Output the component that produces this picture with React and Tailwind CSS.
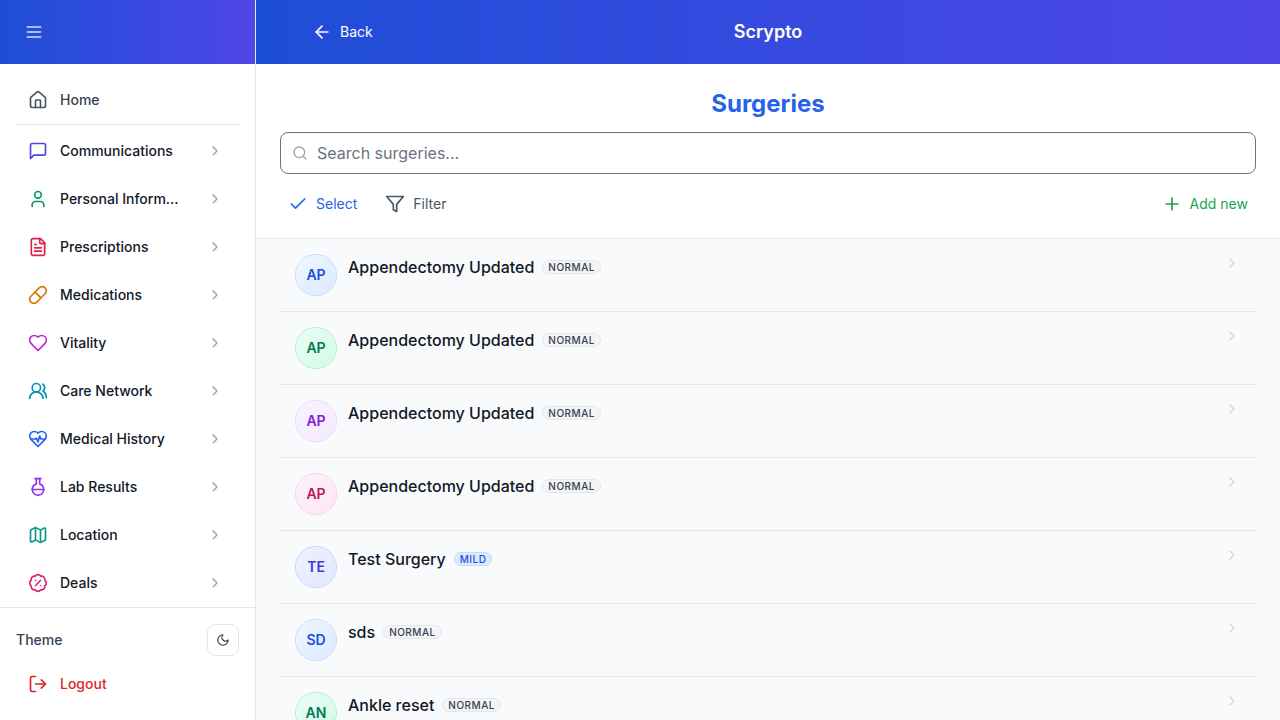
import {
  ArrowLeft, BadgePercent, Check, ChevronRight, FlaskRound,
  House, LogOut, Map, Pill, Plus, Search, User, UsersRound,
} from 'lucide-react';

function Glyph({ size = 20, className = '', children }) {
  return (
    <svg
      width={size}
      height={size}
      viewBox="0 0 24 24"
      fill="none"
      stroke="currentColor"
      strokeWidth="2"
      strokeLinecap="round"
      strokeLinejoin="round"
      aria-hidden="true"
      className={className}
    >
      {children}
    </svg>
  );
}

const HEART =
  'M19 14c1.49-1.46 3-3.21 3-5.5A5.5 5.5 0 0 0 16.5 3c-1.76 0-3 .5-4.5 2-1.5-1.5-2.74-2-4.5-2A5.5 5.5 0 0 0 2 8.5c0 2.3 1.5 4.05 3 5.5l7 7Z';

const MenuIcon = (props) => (
  <Glyph {...props}>
    <path d="M4 6h16M4 12h16M4 18h16" />
  </Glyph>
);

const MessageIcon = (props) => (
  <Glyph {...props}>
    <path d="M21 15a2 2 0 0 1-2 2H7l-4 4V5a2 2 0 0 1 2-2h14a2 2 0 0 1 2 2z" />
  </Glyph>
);

const DocumentIcon = (props) => (
  <Glyph {...props}>
    <path d="M15 2H6a2 2 0 0 0-2 2v16a2 2 0 0 0 2 2h12a2 2 0 0 0 2-2V7Z" />
    <path d="M14 2v4a2 2 0 0 0 2 2h4M10 9H8M16 13H8M16 17H8" />
  </Glyph>
);

const HeartIcon = (props) => (
  <Glyph {...props}>
    <path d={HEART} />
  </Glyph>
);

const HeartPulseIcon = (props) => (
  <Glyph {...props}>
    <path d={HEART} />
    <path d="M3.22 12H9.5l.5-1 2 4.5 2-7 1.5 3.5h5.27" />
  </Glyph>
);

const FilterIcon = (props) => (
  <Glyph {...props}>
    <polygon points="22 3 2 3 10 12.46 10 19 14 21 14 12.46 22 3" />
  </Glyph>
);

const MoonIcon = (props) => (
  <Glyph {...props}>
    <path d="M12 3a6 6 0 0 0 9 9 9 9 0 1 1-9-9Z" />
  </Glyph>
);

const navItems = [
  { label: 'Communications', icon: MessageIcon, color: 'text-[#4f46e5]' },
  { label: 'Personal Information', icon: User, color: 'text-[#059669]' },
  { label: 'Prescriptions', icon: DocumentIcon, color: 'text-[#e11d48]' },
  { label: 'Medications', icon: Pill, color: 'text-[#d97706]' },
  { label: 'Vitality', icon: HeartIcon, color: 'text-[#c026d3]' },
  { label: 'Care Network', icon: UsersRound, color: 'text-[#0891b2]' },
  { label: 'Medical History', icon: HeartPulseIcon, color: 'text-[#2563eb]' },
  { label: 'Lab Results', icon: FlaskRound, color: 'text-[#9333ea]' },
  { label: 'Location', icon: Map, color: 'text-[#0d9488]' },
  { label: 'Deals', icon: BadgePercent, color: 'text-[#db2777]' },
];

const blue = 'bg-[linear-gradient(135deg,#eff6ff,#dbeafe)] text-[#1d4ed8] ring-[#bfdbfe]';
const green = 'bg-[linear-gradient(135deg,#ecfdf5,#d1fae5)] text-[#047857] ring-[#a7f3d0]';
const purple = 'bg-[linear-gradient(135deg,#faf5ff,#f3e8ff)] text-[#7e22ce] ring-[#e9d5ff]';
const pink = 'bg-[linear-gradient(135deg,#fdf2f8,#fce7f3)] text-[#be185d] ring-[#fbcfe8]';
const indigo = 'bg-[linear-gradient(135deg,#eef2ff,#e0e7ff)] text-[#4338ca] ring-[#c7d2fe]';

const surgeries = [
  { name: 'Appendectomy Updated', initials: 'AP', tone: blue, severity: 'Normal' },
  { name: 'Appendectomy Updated', initials: 'AP', tone: green, severity: 'Normal' },
  { name: 'Appendectomy Updated', initials: 'AP', tone: purple, severity: 'Normal' },
  { name: 'Appendectomy Updated', initials: 'AP', tone: pink, severity: 'Normal' },
  { name: 'Test Surgery', initials: 'TE', tone: indigo, severity: 'Mild' },
  { name: 'sds', initials: 'SD', tone: blue, severity: 'Normal' },
  { name: 'Ankle reset', initials: 'AN', tone: green, severity: 'Normal' },
];

const severityTone = {
  Normal: 'bg-[#f3f4f6] text-[#374151] border-[#e5e7eb]',
  Mild: 'bg-[#dbeafe] text-[#1d4ed8] border-[#bfdbfe]',
};

function Sidebar() {
  return (
    <aside className="flex w-64 shrink-0 flex-col border-r border-[#e5e7eb] bg-white">
      <div className="flex h-16 shrink-0 items-center bg-[linear-gradient(to_right,#1d4ed8,#4f46e5)] px-4">
        <button aria-label="Toggle menu" className="p-2 text-white/80">
          <MenuIcon />
        </button>
      </div>
      <nav className="min-h-0 flex-1 overflow-hidden px-4 pt-4">
        <div className="border-b border-[#e5e7eb] pb-1">
          <a href="#home" className="flex h-10 items-center gap-3 px-3 text-sm font-medium text-[#374151]">
            <House size={20} className="text-[#4b5563]" />
            Home
          </a>
        </div>
        <ul className="flex flex-col gap-2 pt-1.5">
          {navItems.map(({ label, icon: Icon, color }) => (
            <li key={label}>
              <button className="flex h-10 w-full items-center gap-3 px-3 text-left text-sm font-medium text-[#111827]">
                <Icon size={20} className={`shrink-0 ${color}`} />
                <span className="mr-2 min-w-0 flex-1 truncate">{label}</span>
                <span className="p-1 text-[#9ca3af]">
                  <ChevronRight size={16} />
                </span>
              </button>
            </li>
          ))}
        </ul>
      </nav>
      <div className="flex shrink-0 flex-col gap-2 border-t border-[#e5e7eb] p-4">
        <div className="flex items-center justify-between">
          <span className="text-sm font-medium text-[#374151]">Theme</span>
          <button aria-label="Dark mode" className="flex size-8 items-center justify-center rounded-lg border border-[#e5e7eb] text-[#374151]">
            <MoonIcon size={14} />
          </button>
        </div>
        <button className="flex h-10 items-center gap-3 px-3 text-sm font-medium text-[#dc2626]">
          <LogOut size={20} />
          Logout
        </button>
      </div>
    </aside>
  );
}

function SurgeryRow({ name, initials, tone, severity }) {
  return (
    <li className="flex items-start gap-3 border-b border-[#e5e7eb] p-4">
      <span className={`flex size-10 shrink-0 items-center justify-center rounded-full text-sm font-semibold ring-1 ${tone}`}>
        {initials}
      </span>
      <div className="flex flex-1 items-center gap-2">
        <h2 className="text-base font-medium text-[#111827]">{name}</h2>
        <span className={`rounded-full border px-[5px] text-[10px] leading-3 font-medium tracking-wider uppercase ${severityTone[severity]}`}>
          {severity}
        </span>
      </div>
      <ChevronRight size={16} className="text-[#d1d5db]" />
    </li>
  );
}

export default function App() {
  return (
    <div className="flex h-screen overflow-hidden bg-white font-['Inter',sans-serif]">
      <Sidebar />
      <div className="flex min-w-0 flex-1 flex-col">
        <header className="grid h-16 shrink-0 grid-cols-3 items-center bg-[linear-gradient(to_right,#1d4ed8,#4f46e5)] px-14 text-white">
          <button className="flex items-center gap-2 justify-self-start text-sm">
            <ArrowLeft size={20} />
            Back
          </button>
          <span className="text-center text-lg font-semibold">Scrypto</span>
        </header>
        <section className="shrink-0 border-b border-[#e5e7eb] px-6 pt-6 pb-4">
          <h1 className="mb-3 text-center text-2xl leading-8 font-bold text-[#2563eb]">Surgeries</h1>
          <label className="mb-3 flex items-center gap-[9px] rounded-lg border border-[#6b7280] px-[11px] py-2 text-[#9ca3af]">
            <Search size={16} className="shrink-0" />
            <input
              type="search"
              aria-label="Search surgeries"
              placeholder="Search surgeries..."
              className="h-6 w-full text-base text-[#111827] outline-none placeholder:text-[#6b7280]"
            />
          </label>
          <div className="flex items-center gap-3 text-sm">
            <button className="flex items-center gap-2 p-2 text-[#2563eb]">
              <Check size={20} />
              Select
            </button>
            <button className="flex items-center gap-2 p-2 text-[#4b5563]">
              <FilterIcon />
              Filter
            </button>
            <button className="ml-auto flex items-center gap-2 p-2 text-[#16a34a]">
              <Plus size={20} />
              Add new
            </button>
          </div>
        </section>
        <main className="min-h-0 flex-1 overflow-hidden bg-[#f9fafb] px-6">
          <ul>
            {surgeries.map((s, i) => (
              <SurgeryRow key={i} {...s} />
            ))}
          </ul>
        </main>
      </div>
    </div>
  );
}
